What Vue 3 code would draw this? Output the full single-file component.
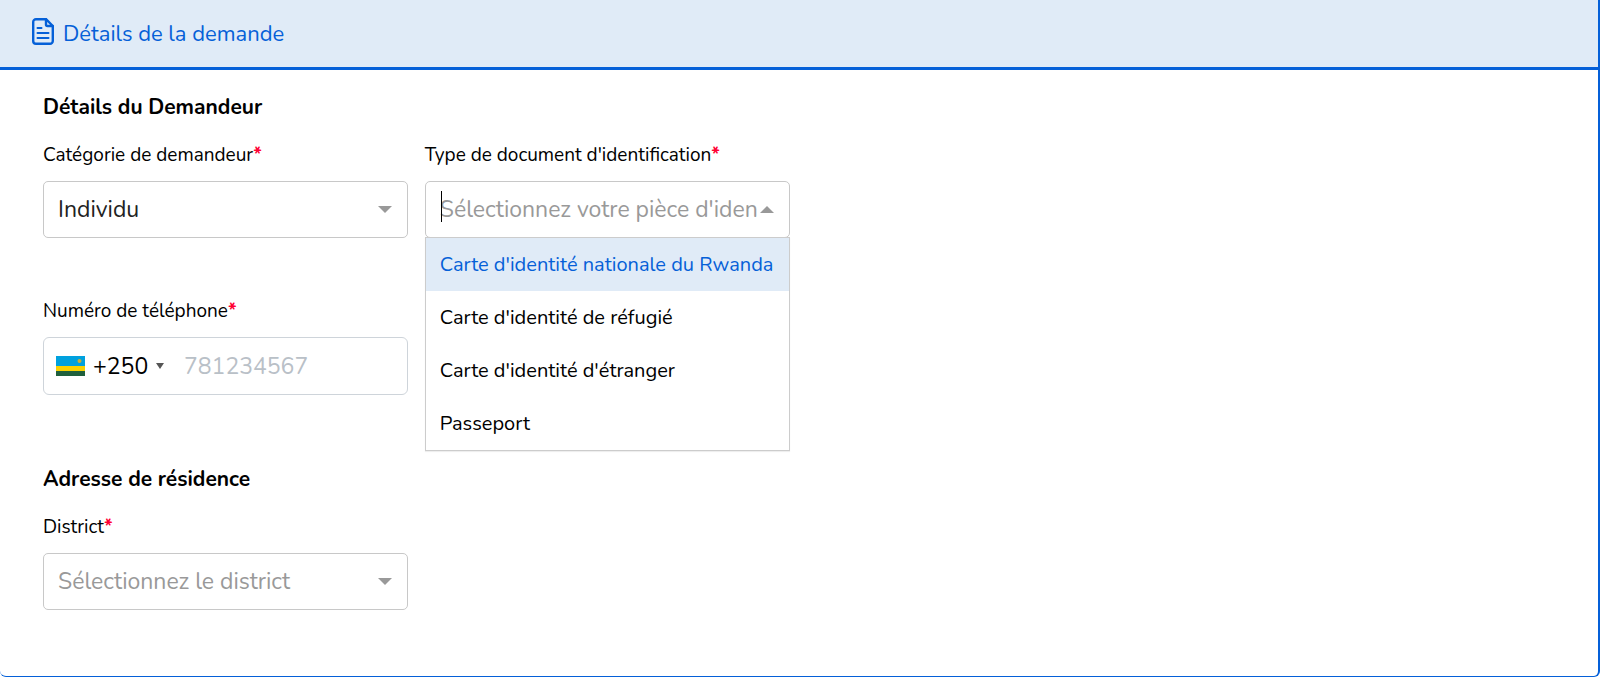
<script setup>
import {ref} from "vue";

const category = ref("individu");
const dialCode = ref("+250");
const phone = ref("");
const district = ref("");
const idType = ref("");
const highlighted = ref(0);
const isOpen = ref(true);

const idTypes = [
  "Carte d'identité nationale du Rwanda",
  "Carte d'identité de réfugié",
  "Carte d'identité d'étranger",
  "Passeport"
];

const choose = (type) => {
  idType.value = type;
  isOpen.value = false;
};
</script>

<template>
  <section class="card">
    <header class="card-header">
      <svg class="file-icon" viewBox="0 0 22 27" aria-hidden="true">
        <path d="M14 1.2H4A2.8 2.8 0 0 0 1.2 4v19A2.8 2.8 0 0 0 4 25.8h14a2.8 2.8 0 0 0 2.8-2.8V8z" />
        <path d="M14 1.2v5.300A1.500 1.500 0 0 0 15.500 8h5.300" />
        <path d="M5.500 10h4M5.500 15h11M5.500 20h11" stroke-width="2" />
      </svg>
      <h1>Détails de la demande</h1>
    </header>

    <form class="card-body" @submit.prevent>
      <h2>Détails du Demandeur</h2>
      <div class="grid">
        <div class="field">
          <label for="category">Catégorie de demandeur<span class="required">*</span></label>
          <div class="control">
            <select id="category" v-model="category">
              <option value="individu">Individu</option>
            </select>
            <svg class="arrow" viewBox="0 0 14 7" aria-hidden="true"><path d="M0 0h14L7 7z" /></svg>
          </div>
        </div>

        <div class="field">
          <label for="id-type">Type de document d'identification<span class="required">*</span></label>
          <div class="control combo">
            <span v-if="isOpen" class="caret"></span>
            <input id="id-type" v-model="idType" type="text" role="combobox" aria-controls="id-types"
              :aria-expanded="isOpen" autocomplete="off" placeholder="Sélectionnez votre pièce d'identité"
              @focus="isOpen = true">
            <svg class="arrow" :class="{ up: isOpen }" viewBox="0 0 14 7" aria-hidden="true"><path d="M0 0h14L7 7z" /></svg>
            <ul v-if="isOpen" id="id-types" class="menu" role="listbox">
              <li v-for="(type, i) in idTypes" :key="type" role="option" :aria-selected="i === highlighted"
                :class="{ highlighted: i === highlighted }" @mouseenter="highlighted = i" @click="choose(type)">
                {{ type }}
              </li>
            </ul>
          </div>
        </div>
      </div>

      <div class="grid phone-row">
        <div class="field">
          <label for="phone">Numéro de téléphone<span class="required">*</span></label>
          <div class="control phone">
            <svg class="flag" viewBox="0 0 29 20" aria-hidden="true">
              <rect width="29" height="20" fill="#00a1de" />
              <rect y="10" width="29" height="5" fill="#fad201" />
              <rect y="15" width="29" height="5" fill="#20603d" />
              <circle cx="23.5" cy="5" r="2" fill="#c9b037" />
            </svg>
            <select v-model="dialCode" class="dial" aria-label="Indicatif">
              <option>+250</option>
            </select>
            <svg class="dial-arrow" viewBox="0 0 8 6" aria-hidden="true"><path d="M0 0h8L4 6z" /></svg>
            <input id="phone" v-model="phone" type="tel" placeholder="781234567">
          </div>
        </div>
      </div>

      <h2>Adresse de résidence</h2>
      <div class="grid">
        <div class="field">
          <label for="district">District<span class="required">*</span></label>
          <div class="control">
            <select id="district" v-model="district" :class="{ empty: !district }">
              <option value="">Sélectionnez le district</option>
            </select>
            <svg class="arrow" viewBox="0 0 14 7" aria-hidden="true"><path d="M0 0h14L7 7z" /></svg>
          </div>
        </div>
      </div>
    </form>
  </section>
</template>

<style>
body {
  margin: 0;
  background: #fff;
}
</style>

<style scoped>
.card {
  box-sizing: border-box;
  min-height: 100vh;
  border: solid #0560d8;
  border-width: 0 2px 1px 0;
  border-radius: 0 0 6px 6px;
  font-family: Nunito, Lato, sans-serif;
  color: #000;
}

.card-header {
  display: flex;
  align-items: center;
  gap: 9px;
  height: 67px;
  padding: 0 32px;
  background: #e0ebf7;
  border-bottom: 3px solid #0560d8;
  color: #0560d8;
}
.file-icon {
  width: 22px;
  height: 27px;
  margin-bottom: 4px;
  fill: none;
  stroke: currentColor;
  stroke-width: 2.4;
  stroke-linecap: round;
  stroke-linejoin: round;
}

h1 {
  margin: 0;
  font-size: 22px;
  font-weight: 400;
}

.card-body {
  padding: 21px 45px 21px 43px;
}

h2 {
  margin: 0;
  font-size: 21px;
  font-weight: 700;
  line-height: 32px;
}

.grid {
  display: grid;
  grid-template-columns: repeat(4, 1fr);
  gap: 17px;
}
.phone-row {
  margin: 41px 0 68px;
}

.field {
  min-width: 0;
}

label {
  display: block;
  padding: 16px 0 10px;
  font-size: 19px;
  line-height: 32px;
}
.required {
  font-weight: 700;
  color: #ff0033;
}

.control {
  position: relative;
  display: flex;
  align-items: center;
  box-sizing: border-box;
  height: 57px;
  border: 1px solid #c8c8c8;
  border-radius: 5px;
}

select,
input {
  appearance: none;
  box-sizing: border-box;
  width: 100%;
  height: 100%;
  min-width: 0;
  margin: 0;
  padding: 0 48px 0 14px;
  border: 0;
  outline: 0;
  background: transparent;
  font: inherit;
  font-size: 23px;
  color: #222;
}
select.empty {
  color: #999;
}
input::placeholder {
  color: #999;
  opacity: 1;
}

.arrow {
  position: absolute;
  right: 15px;
  width: 14px;
  height: 7px;
  fill: #999;
  pointer-events: none;
}
.arrow.up {
  transform: rotate(180deg);
}

.combo input {
  margin-right: 32px;
  padding-right: 0;
}
.caret {
  position: absolute;
  top: 9px;
  left: 15px;
  width: 1px;
  height: 31px;
  background: #000;
}

.menu {
  position: absolute;
  z-index: 1;
  top: 100%;
  left: -1px;
  right: -1px;
  margin: 0;
  padding: 0;
  list-style: none;
  background: #fff;
  border: 1px solid #ccc;
  box-shadow: 0 1px 1px #0001;
}
.menu li {
  padding: 10px 14px;
  font-size: 20px;
  line-height: 33px;
  white-space: nowrap;
  cursor: pointer;
}
.menu li.highlighted {
  background: #e0ebf7;
  color: #0560d8;
}

.phone {
  height: 58px;
  border-color: #ced4da;
  border-radius: 6px;
}
.flag {
  flex: none;
  width: 29px;
  height: 20px;
  margin-left: 12px;
}
.phone .dial {
  flex: none;
  width: 71px;
  padding: 0 0 0 8px;
  color: #000;
}
.dial-arrow {
  flex: none;
  width: 8px;
  height: 6px;
  fill: #555;
}
.phone input {
  padding: 0 14px 0 20px;
}
.phone input::placeholder {
  color: #b9c0c7;
}
</style>
